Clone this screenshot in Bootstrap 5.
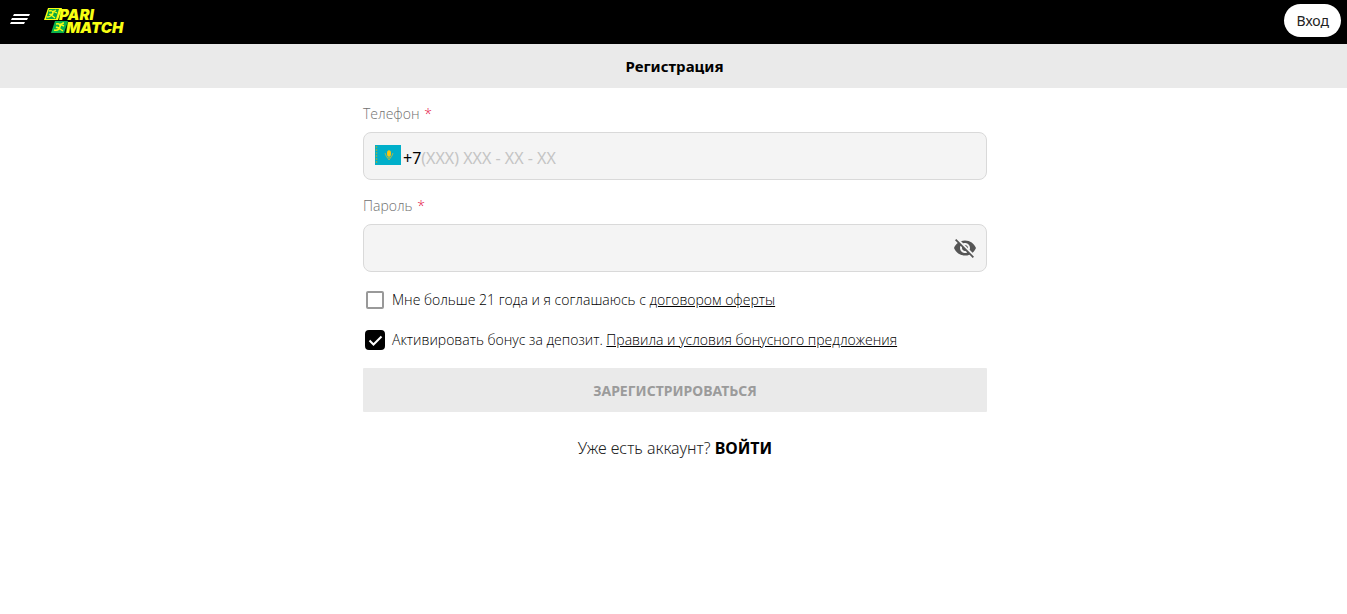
<!DOCTYPE html>
<html lang="ru">
<head>
<meta charset="utf-8">
<meta name="viewport" content="width=device-width, initial-scale=1">
<title>Регистрация</title>
<link href="https://cdn.jsdelivr.net/npm/bootstrap@5.3.0/dist/css/bootstrap.min.css" rel="stylesheet">
<style>
body{font-family:"Noto Sans","Open Sans",sans-serif;font-size:14px;line-height:20px;color:#333;background:#fff}
.topbar{background:#000;height:44px;padding:0 6px 0 8px}
.menu-btn{width:24px;height:24px;margin-top:-6px}
.login-btn{height:33px;font-size:14px;line-height:20px;color:#212121;padding:0 12px;margin-top:-3px}
.login-btn:hover{background:#eee}
.page-title{background:#eaeaea;height:44px;font-size:15px;line-height:45px;font-weight:700;color:#000;padding-left:2px}
.form-area{padding-left:3px}
.signup{max-width:624px;padding-top:16px}
.field-label{font-family:"Open Sans","Noto Sans",sans-serif;font-size:14px;line-height:20px;font-weight:300;color:#707070;margin-bottom:8px}
.field-label span{color:#e5113f;margin-left:1px}
.field-box{height:48px;background:#f4f4f4;border:1px solid #d9d9d9;border-radius:8px;padding:0 9px 0 11px;margin-bottom:16px}
.field-box:focus-within{border-color:#999}
.field-box input{background:transparent;border:0;outline:0;padding:0;font-size:16px;min-width:0;color:#000}
.field-box input::placeholder{color:#c4c4c4;opacity:1}
.prefix{font-size:16px;color:#000;margin-left:2px}
.field-box .phone-text{padding-top:3px}
.flag{margin-bottom:2px}
.agree{font-family:"Open Sans","Noto Sans",sans-serif;height:24px;margin-bottom:16px;padding-left:3px;font-weight:300;color:#000}
.agree input.form-check-input{width:18px;height:18px;margin:0 8px 0 0;border:2px solid #999;border-radius:2px;flex:none}
.agree input.form-check-input:checked{width:20px;height:20px;margin:0 7px 0 -1px;background-color:#000;border-color:#000;border-radius:4px;background-size:20px;background-image:url("data:image/svg+xml,%3Csvg xmlns='http://www.w3.org/2000/svg' viewBox='0 0 20 20'%3E%3Cpath d='M4.500 10.500l4 4 8-8' fill='none' stroke='white' stroke-width='2'/%3E%3C/svg%3E")}
.agree a{color:#000}
.submit-btn,.submit-btn:disabled{height:44px;background:#eaeaea;color:#9b9b9b;border:0;border-radius:1px;font-size:14px;font-weight:700;opacity:1}
.have-account{font-size:16px;line-height:24px;font-weight:300;margin-top:24px;color:#222}
.have-account a{color:#000;font-weight:700}
.logo-text{font:italic 900 15px "Inter","Liberation Sans",sans-serif;fill:#f8ff13}
</style>
</head>
<body>
<header class="topbar d-flex align-items-center">
  <button class="menu-btn btn p-0 border-0 d-flex" type="button" aria-label="Меню">
    <svg width="24" height="24" viewBox="0 0 24 24" fill="#fff"><path d="M6 7h16l-1 2H5zM4 11h16l-1 2H3zM3 15h14l-1 2H2z"/></svg>
  </button>
  <a href="#" class="d-flex ms-2" aria-label="Parimatch">
    <svg width="88" height="32" viewBox="0 0 88 32">
      <path d="M8 2h14l-4 12H4z" fill="#f8ff13"/><path d="M9 3h10l-3 10H6z" fill="#0aa843"/>
      <path d="M9 5q4-1 4 2t-4 1M7 11q4 0 5-3t4-4M10 8l5 4M13 5l4 2" fill="none" stroke="#f8ff13" stroke-width="1.300"/>
      <path d="M15 15h13l-4 12H11z" fill="#0ab34b"/>
      <path d="M16 18q4-1 4 2t-4 1M14 24q5 1 6-3t4-4M17 21l6 4M20 18l4 2" fill="none" stroke="#f8ff13" stroke-width="1.400"/>
      <text class="logo-text" x="19" y="14">PARI</text><text class="logo-text" x="26" y="27">MATCH</text>
    </svg>
  </a>
  <button class="login-btn btn btn-light bg-white border-0 rounded-pill ms-auto" type="button">Вход</button>
</header>
<h1 class="page-title text-center m-0">Регистрация</h1>
<main class="form-area">
  <form class="signup mx-auto">
    <label class="field-label d-block" for="phone">Телефон <span>*</span></label>
    <div class="field-box d-flex align-items-center">
      <svg class="flag flex-shrink-0" width="26" height="20" viewBox="0 0 26 20"><path fill="#00afca" d="M0 0h26v20H0z"/><path d="M1.500 1v18" stroke="#7eae5a" stroke-width="1.500" stroke-dasharray="2 1"/><ellipse cx="14" cy="8.500" rx="2" ry="3.200" fill="#fec50c"/><path d="M10 8q1 5 4 5t4-5M12 12l2 3 2-3" fill="none" stroke="#a5b950"/></svg>
      <span class="prefix phone-text">+7</span>
      <input class="phone-text flex-grow-1" id="phone" type="tel" placeholder="(XXX) XXX - XX - XX">
    </div>
    <label class="field-label d-block" for="password">Пароль <span>*</span></label>
    <div class="field-box d-flex align-items-center">
      <input class="flex-grow-1" id="password" type="password">
      <button class="btn p-0 border-0 d-flex" type="button" aria-label="Показать пароль">
        <svg width="24" height="24" viewBox="0 0 24 24" fill="#555"><path d="M12 7c2.760 0 5 2.240 5 5 0 .65-.13 1.260-.36 1.830l2.920 2.920c1.510-1.260 2.700-2.890 3.430-4.750-1.730-4.390-6-7.500-11-7.500-1.400 0-2.740.25-3.980.7l2.160 2.160C10.740 7.130 11.350 7 12 7zM2 4.270l2.280 2.280.46.46C3.080 8.300 1.780 10.020 1 12c1.730 4.390 6 7.500 11 7.500 1.550 0 3.030-.3 4.380-.84l.42.42L19.730 22 21 20.730 3.270 3 2 4.270zM7.530 9.800l1.550 1.550c-.05.21-.08.43-.08.65 0 1.660 1.340 3 3 3 .22 0 .44-.03.65-.08l1.550 1.550c-.67.33-1.410.53-2.200.53-2.760 0-5-2.240-5-5 0-.79.2-1.530.53-2.200zm4.310-.78l3.150 3.150.02-.16c0-1.660-1.340-3-3-3l-.17.01z"/></svg>
      </button>
    </div>
    <div class="agree d-flex align-items-center">
      <input class="form-check-input" type="checkbox" id="age">
      <label for="age">Мне больше 21 года и я соглашаюсь с <a href="#">договором оферты</a></label>
    </div>
    <div class="agree d-flex align-items-center">
      <input class="form-check-input" type="checkbox" id="bonus" checked>
      <label for="bonus">Активировать бонус за депозит. <a href="#">Правила и условия бонусного предложения</a></label>
    </div>
    <button class="submit-btn btn w-100" type="submit" disabled>ЗАРЕГИСТРИРОВАТЬСЯ</button>
    <p class="have-account text-center mb-0">Уже есть аккаунт? <a class="text-decoration-none" href="#">ВОЙТИ</a></p>
  </form>
</main>
<script src="https://cdn.jsdelivr.net/npm/bootstrap@5.3.0/dist/js/bootstrap.bundle.min.js"></script>
</body>
</html>
